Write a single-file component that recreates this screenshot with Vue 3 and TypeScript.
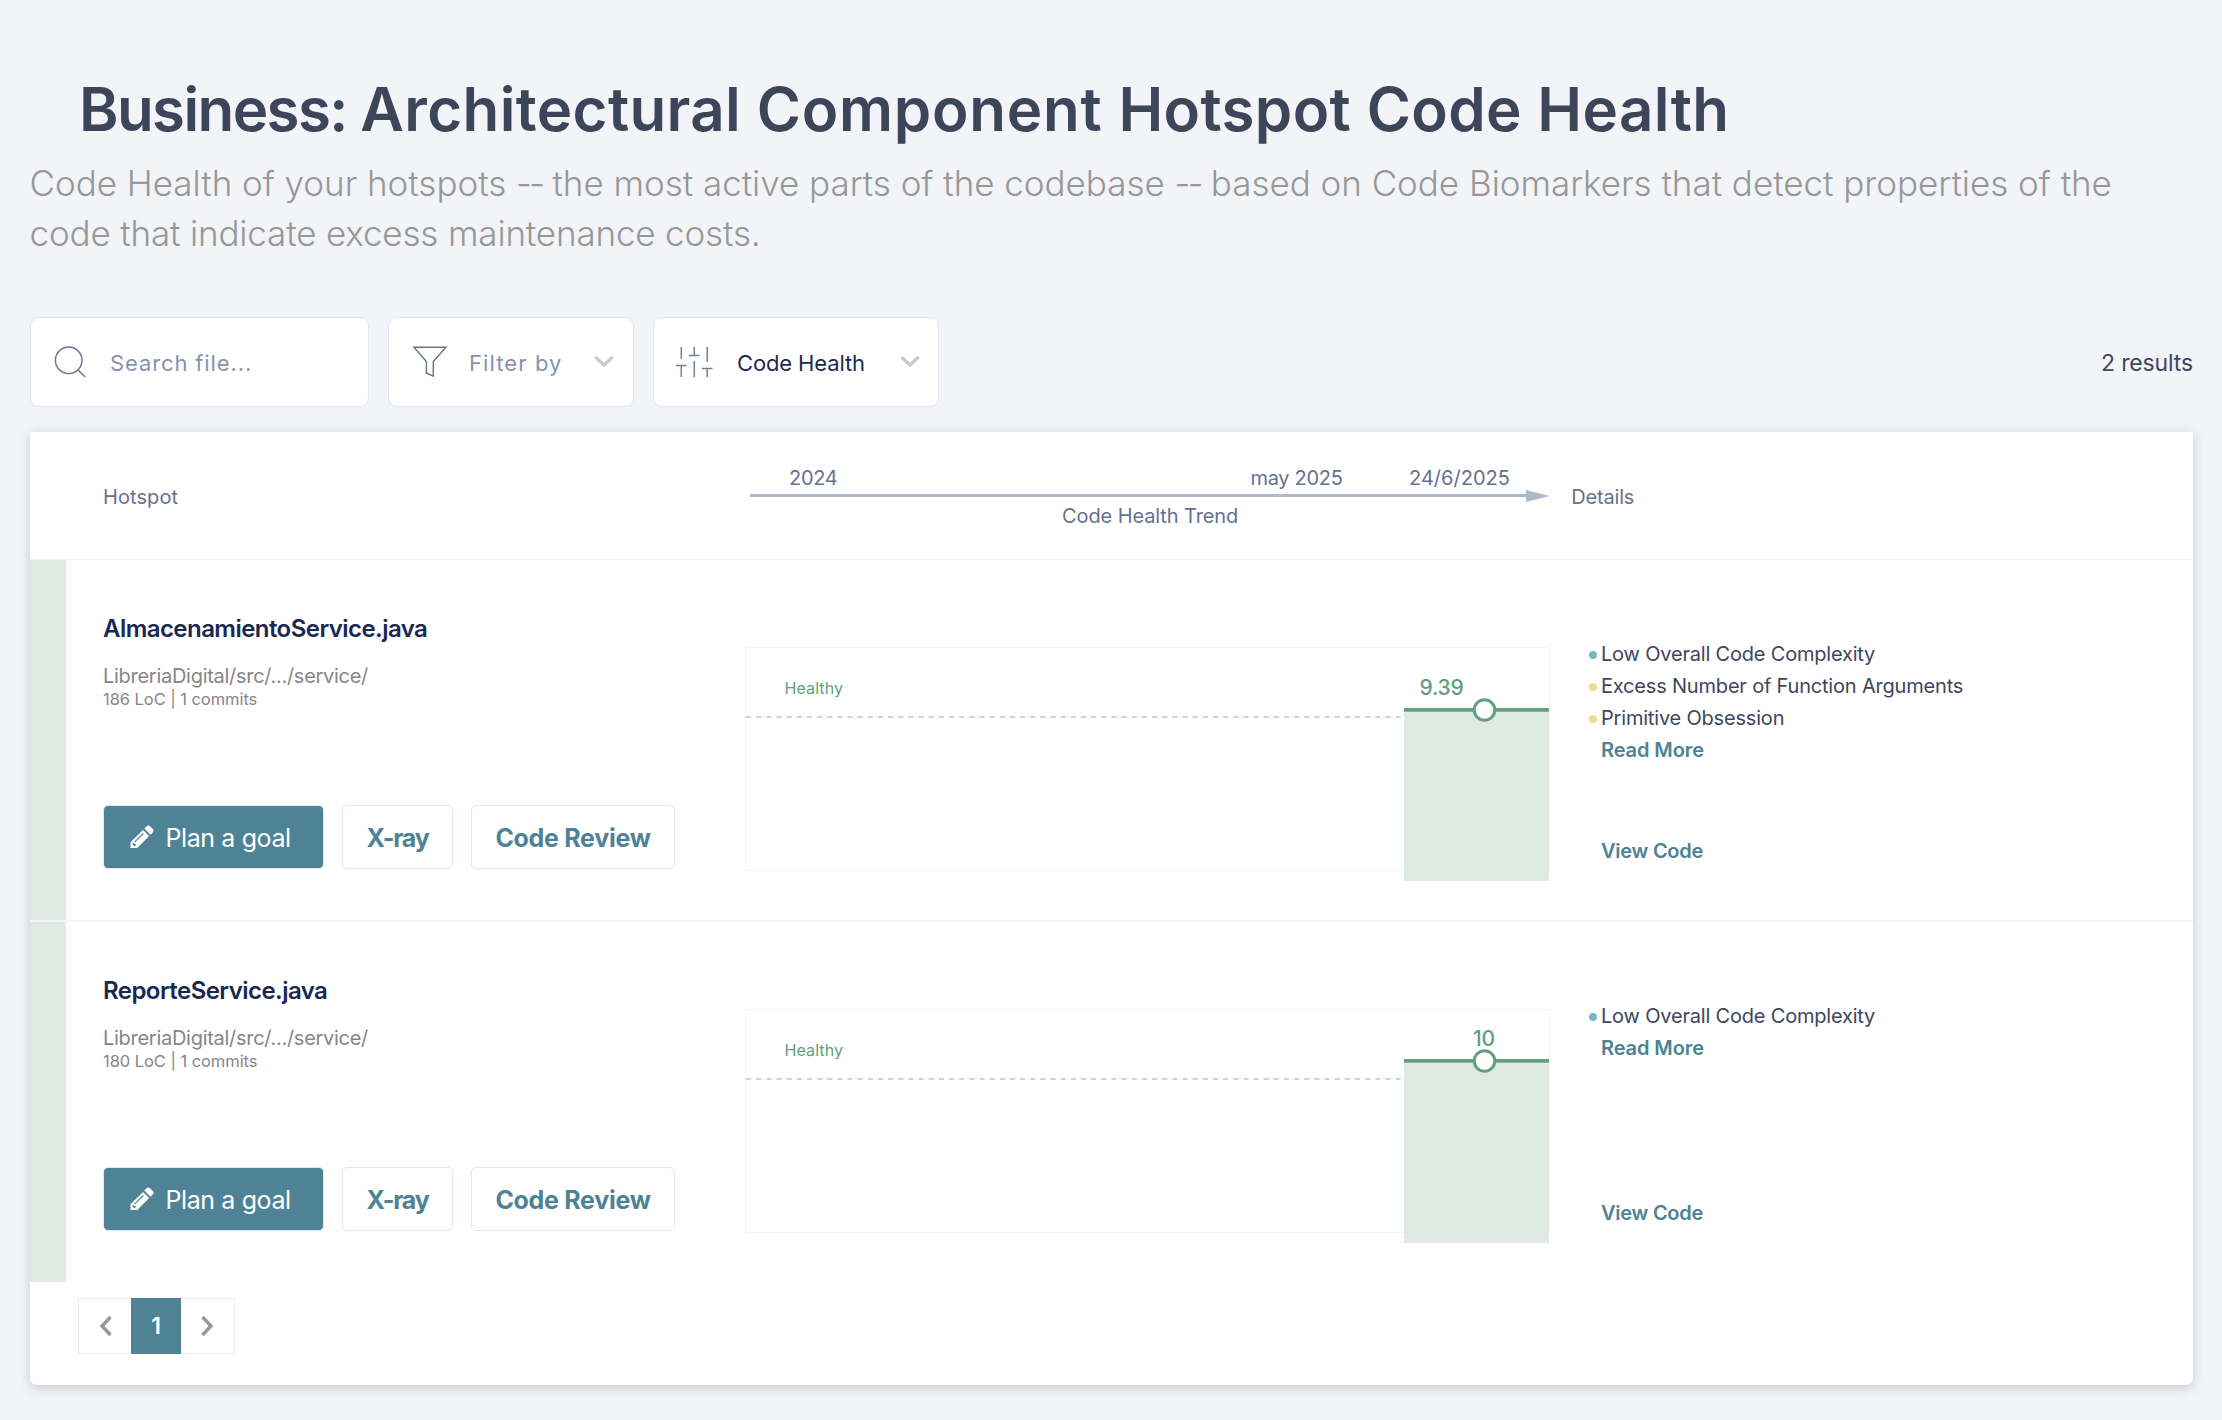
<script setup lang="ts">
interface Finding {
  label: string
  tone: 'info' | 'warn'
}

interface Hotspot {
  name: string
  path: string
  loc: number
  commits: number
  score: string
  scoreX: number
  lineY: number
  findings: Finding[]
}

const hotspots: Hotspot[] = [
  {
    name: 'AlmacenamientoService.java',
    path: 'LibreriaDigital/src/.../service/',
    loc: 186,
    commits: 1,
    score: '9.39',
    scoreX: 674.5,
    lineY: 150,
    findings: [
      { label: 'Low Overall Code Complexity', tone: 'info' },
      { label: 'Excess Number of Function Arguments', tone: 'warn' },
      { label: 'Primitive Obsession', tone: 'warn' },
    ],
  },
  {
    name: 'ReporteService.java',
    path: 'LibreriaDigital/src/.../service/',
    loc: 180,
    commits: 1,
    score: '10',
    scoreX: 728,
    lineY: 139,
    findings: [{ label: 'Low Overall Code Complexity', tone: 'info' }],
  },
]
</script>

<template>
  <main class="page">
    <h1 class="title"><span class="lead">Business: </span><span>Architectural </span><span class="wide">Component </span><span>Hotspot Code Health</span></h1>
    <p class="subtitle">
      Code Health of your hotspots <span class="dash">--</span> the most active parts of the codebase <span class="dash">--</span> based on Code Biomarkers that detect properties of the<br />
      <span class="second">code that indicate excess maintenance costs.</span>
    </p>

    <div class="toolbar">
      <div class="control search">
        <svg class="search-icon" width="34" height="36" viewBox="0 0 34 36">
          <circle cx="16.7" cy="16.3" r="13.3" />
          <path d="M26.1 25.9 33.1 33" />
        </svg>
        <span class="placeholder">Search file...</span>
      </div>
      <div class="control filter">
        <svg class="filter-icon" width="36" height="34" viewBox="0 0 36 34">
          <path d="M1.8 2.3H34L21.3 16.6V31.2L14.4 28V16.6Z" />
        </svg>
        <span class="placeholder filter-text">Filter by</span>
        <svg class="chevron" width="20" height="14" viewBox="0 0 20 14"><path d="M2.5 3 10 10 17.5 3" /></svg>
      </div>
      <div class="control sort">
        <svg class="sliders" width="38" height="34" viewBox="0 0 38 34">
          <path d="M6.3 2V14M1 20.500H11.5M6.3 20.500V32M19.3 2V10.500M14 10.500H24.500M19.300 16V32M32.200 2V17M27 23.500H37.500M32.200 23.500V32" />
        </svg>
        <span class="sort-text">Code Health</span>
        <svg class="chevron" width="20" height="14" viewBox="0 0 20 14"><path d="M2.5 3 10 10 17.5 3" /></svg>
      </div>
      <span class="results">2 results</span>
    </div>

    <section class="card">
      <header class="head">
        <span class="head-name">Hotspot</span>
        <svg class="axis" width="805" height="127" viewBox="0 0 805 127">
          <text class="tick-year" x="44" y="53">2024</text>
          <text class="tick-month" x="505.5" y="53">may 2025</text>
          <text class="tick-day" x="664" y="53">24/6/2025</text>
          <text class="axis-name" x="317" y="91">Code Health Trend</text>
          <rect x="5" y="62" width="778" height="3" />
          <path d="M781 58 805 64 781 70Z" />
        </svg>
        <span class="head-details">Details</span>
      </header>

      <article v-for="h in hotspots" :key="h.name" class="row">
        <div class="strip"></div>
        <div class="info">
          <h2 class="name">{{ h.name }}</h2>
          <div class="path">{{ h.path }}</div>
          <div class="meta">{{ h.loc }} LoC | {{ h.commits }} commits</div>
          <div class="actions">
            <button class="btn plan">
              <svg width="26" height="26" viewBox="0 0 26 26">
                <path fill="#fff" d="M17.300 2.600a2.800 2.800 0 0 1 4 0l2.200 2.200a2.800 2.800 0 0 1 0 4l-2 2-6.200-6.200z" />
                <path fill="#fff" d="M14 5.900 20.200 12.100 8.300 24H1.500V18.200z" />
                <path fill="none" stroke="#4e8294" stroke-width="1.100" d="M14.300 9.500 5.600 18.200" />
                <path fill="#4e8294" d="M4.300 18.700 5.400 20H6.700V21.300L5.600 22.400 3.200 20z" />
              </svg>
              <span>Plan a goal</span>
            </button>
            <button class="btn xray">X-ray</button>
            <button class="btn review">Code Review</button>
          </div>
        </div>
        <svg class="chart" width="805" height="360" viewBox="0 0 805 360">
          <rect x="0.5" y="87.5" width="804" height="223" fill="none" stroke="#f2f3f3" />
          <path d="M1 157H657" stroke="#c3dbcd" stroke-width="2" stroke-dasharray="5.15 5" fill="none" />
          <text class="zone" x="39.5" y="134.3">Healthy</text>
          <rect x="659" :y="h.lineY" width="145" :height="321 - h.lineY" fill="#e0eae5" />
          <rect x="659" :y="h.lineY - 2" width="145" height="3.7" fill="#659f7d" />
          <circle cx="739.5" :cy="h.lineY" r="10.3" fill="#fff" stroke="#659f7d" stroke-width="3" />
          <text class="score" :x="h.scoreX" :y="h.lineY - 15">{{ h.score }}</text>
        </svg>
        <div class="details">
          <ul class="findings">
            <li v-for="f in h.findings" :key="f.label">
              <i class="dot" :class="f.tone"></i><span>{{ f.label }}</span>
            </li>
          </ul>
          <a class="link more">Read More</a>
          <a class="link code">View Code</a>
        </div>
      </article>

      <nav class="pager">
        <span class="page-btn prev">
          <svg width="14" height="22" viewBox="0 0 14 22"><path d="M11.500 2 3 11 11.500 20" /></svg>
        </span>
        <span class="page-btn current">1</span>
        <span class="page-btn next">
          <svg width="14" height="22" viewBox="0 0 14 22"><path d="M2.500 2 11 11 2.500 20" /></svg>
        </span>
      </nav>
    </section>
  </main>
</template>

<style>
body {
  margin: 0;
  background: #f2f4f8;
}
</style>

<style scoped>
.page {
  box-sizing: border-box;
  width: 2222px;
  height: 1420px;
  padding: 73px 29px 0 30px;
  background: #f2f4f8;
  font-family: Inter, 'Open Sans', sans-serif;
  color: #3d465c;
  overflow: hidden;
}
.title {
  margin: 0 0 0 49px;
  font-size: 60px;
  line-height: 72px;
  font-weight: 600;
  letter-spacing: 0.38px;
  color: #3c4559;
  white-space: nowrap;
}
.title .lead {
  letter-spacing: -1.6px;
}
.title .wide {
  letter-spacing: 0.78px;
}
.subtitle {
  margin: 13px 0 0 -0.5px;
  font-size: 35px;
  line-height: 50px;
  font-weight: 300;
  letter-spacing: -0.03px;
  color: #979797;
  white-space: nowrap;
}
.dash {
  letter-spacing: -2.6px;
}
.second {
  letter-spacing: -0.16px;
}
.toolbar {
  display: flex;
  align-items: center;
  height: 90px;
  margin-top: 59px;
}
.control {
  box-sizing: border-box;
  display: flex;
  align-items: center;
  height: 90px;
  border: 1px solid #e2e6f0;
  border-radius: 9px;
  background: #fff;
  font-size: 22px;
  line-height: 30px;
}
.control svg {
  fill: none;
  flex: none;
}
.search {
  width: 339px;
  margin-right: 19px;
  padding-left: 20.5px;
}
.search-icon,
.filter-icon {
  stroke: #67738d;
  stroke-width: 1.4;
}
.placeholder {
  color: #8792b1;
  letter-spacing: 0.88px;
  margin: 1.5px 0 0 24.5px;
}
.filter {
  width: 246px;
  margin-right: 19px;
  padding-left: 23px;
}
.filter-text {
  letter-spacing: 1.1px;
  width: 125px;
  margin-left: 21px;
}
.sliders {
  stroke: #747f99;
  stroke-width: 1.5;
}
.sort {
  width: 286px;
  padding-left: 21px;
}
.sort-text {
  width: 163px;
  margin: 1.5px 0 0 24px;
  color: #1b2b50;
  letter-spacing: -0.13px;
}
.chevron {
  stroke: #cbcbcb;
  stroke-width: 3.6;
  stroke-linecap: round;
  stroke-linejoin: round;
}
.results {
  margin: 1px 0 0 auto;
  font-size: 23px;
  line-height: 30px;
  letter-spacing: -0.14px;
  color: #3d465e;
}
.card {
  box-sizing: border-box;
  height: 953px;
  margin-top: 25px;
  background: #fff;
  border-radius: 0 0 7px 7px;
  box-shadow: 0 3px 12px rgba(40, 40, 60, 0.2);
}
.head {
  display: grid;
  grid-template-columns: 715px 805px 1fr;
  height: 127px;
  border-bottom: 1px solid #f2f3f4;
  font-size: 20px;
  line-height: 24px;
  color: #66718e;
}
.head-name {
  padding: 52.5px 0 0 73px;
  letter-spacing: 0.08px;
}
.head-details {
  padding: 52.5px 0 0 21.3px;
  letter-spacing: -0.19px;
}
.axis {
  display: block;
  fill: #b0b8cb;
}
.axis text {
  fill: #66718e;
  font-size: 20px;
}
.tick-year {
  letter-spacing: -0.3px;
}
.tick-month {
  letter-spacing: -0.3px;
}
.tick-day {
  letter-spacing: 0.02px;
}
.axis-name {
  letter-spacing: -0.1px;
}
.row {
  display: grid;
  grid-template-columns: 36px 679px 805px 1fr;
  height: 360px;
}
.row + .row {
  border-top: 2px solid #f4f5f5;
}
.strip {
  background: #e0eae5;
}
.info {
  padding: 54px 0 0 37px;
}
.name {
  margin: 0;
  font-size: 24px;
  line-height: 30px;
  font-weight: 600;
  letter-spacing: -0.55px;
  color: #1a2850;
}
.path {
  margin-top: 20px;
  font-size: 20px;
  line-height: 24px;
  letter-spacing: -0.28px;
  color: #868686;
}
.meta {
  margin-top: 1px;
  font-size: 16.5px;
  line-height: 20px;
  letter-spacing: -0.06px;
  color: #868686;
}
.actions {
  display: flex;
  margin-top: 96px;
}
.btn {
  box-sizing: border-box;
  display: flex;
  align-items: center;
  justify-content: center;
  height: 64px;
  padding: 0;
  border: 1px solid #e2e6f3;
  border-radius: 5px;
  background: #fff;
  color: #4e8294;
  font-family: inherit;
  font-size: 25px;
  line-height: 30px;
  font-weight: 700;
}
.plan {
  width: 221px;
  justify-content: flex-start;
  padding-left: 25px;
  background: #4e8294;
  color: #fff;
  font-weight: 400;
  letter-spacing: -0.4px;
}
.plan span {
  margin: 2px 0 0 10.5px;
}
.xray {
  width: 111px;
  margin-left: 18px;
  padding-top: 2px;
  letter-spacing: -1.2px;
}
.review {
  width: 204px;
  margin-left: 18px;
  padding-top: 2px;
  letter-spacing: -0.3px;
}
.chart {
  display: block;
}
.zone {
  fill: #5f9f7b;
  font-size: 16px;
  letter-spacing: 0.09px;
}
.score {
  fill: #5f9f7b;
  font-size: 21px;
  font-weight: 500;
  letter-spacing: -0.22px;
}
.details {
  display: flex;
  flex-direction: column;
  box-sizing: border-box;
  height: 360px;
  padding: 77.5px 0 53.5px 38.5px;
  font-size: 20px;
  line-height: 32px;
}
.findings {
  margin: 0;
  padding: 0;
  list-style: none;
  letter-spacing: -0.19px;
}
.findings li {
  display: flex;
  align-items: center;
  height: 32px;
}
.findings span {
  margin-left: 4px;
}
.dot {
  width: 8.5px;
  height: 8.5px;
  margin-top: 2.5px;
  border-radius: 50%;
}
.dot.info {
  padding: 0;
  background: #78b7c2;
}
.dot.warn {
  background: #f2d795;
}
.link {
  margin-left: 12.5px;
  font-weight: 600;
  color: #4e8294;
}
.more {
  letter-spacing: -0.1px;
}
.code {
  margin-top: auto;
  letter-spacing: -0.25px;
}
.pager {
  display: flex;
  width: 157px;
  height: 56px;
  margin: 16px 0 0 48px;
}
.page-btn {
  box-sizing: border-box;
  display: flex;
  align-items: center;
  justify-content: center;
  border: 1px solid #ebecec;
}
.page-btn svg {
  fill: none;
  stroke: #979797;
  stroke-width: 3.4;
}
.prev {
  width: 53px;
  padding-left: 1.5px;
  border-right: 0;
}
.current {
  width: 50px;
  border: 0;
  background: #4e8294;
  color: #fff;
  font-size: 23px;
  font-weight: 600;
}
.next {
  width: 54px;
  padding-right: 2px;
  border-left: 0;
}
</style>
